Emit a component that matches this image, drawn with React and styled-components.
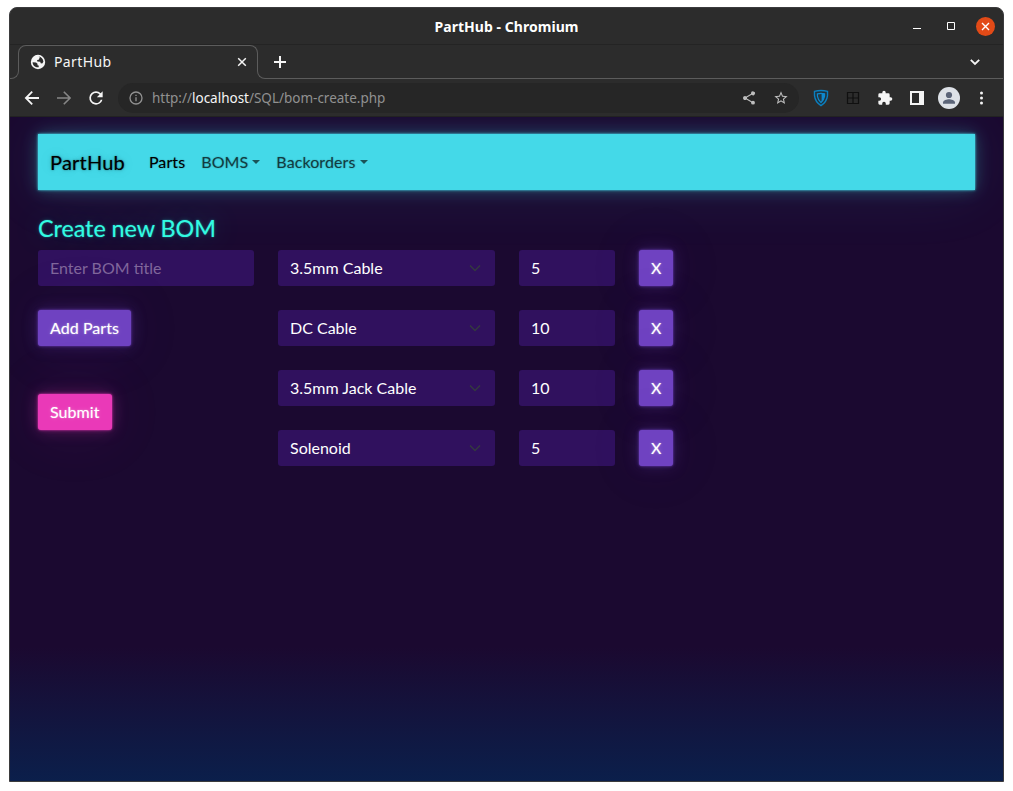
import React from "react";
import styled, { createGlobalStyle, css } from "styled-components";

const GlobalStyle = createGlobalStyle`
  *, *::before, *::after { box-sizing: border-box; }
  body { margin: 0; background: #fff; }
  button, input { font: inherit; margin: 0; }
`;

const glow = (rgb) => css`
  box-shadow: 0 0 2px rgba(${rgb}, 0.9), 0 0 4px rgba(${rgb}, 0.4),
    0 0 1rem rgba(${rgb}, 0.3), 0 0 4rem rgba(${rgb}, 0.1);
`;

const Desktop = styled.div`
  width: 1013px;
  height: 791px;
  padding: 7px 9px 9px;
  overflow: hidden;
`;

const Window = styled.div`
  width: 995px;
  height: 775px;
  display: flex;
  flex-direction: column;
  overflow: hidden;
  border: 1px solid #3b3b3d;
  border-radius: 8px 8px 0 0;
  background: #2c2c2c;
  font-family: "Noto Sans", "Open Sans", sans-serif;
`;

const TitleBar = styled.header`
  flex: none;
  height: 37px;
  display: grid;
  grid-template-columns: 1fr auto 1fr;
  align-items: center;
  border-bottom: 1px solid #242424;
  color: #fff;
`;

const WindowTitle = styled.div`
  grid-column: 2;
  font-size: 14px;
  font-weight: 700;
  line-height: 18px;
  padding-top: 2px;
  white-space: nowrap;
  letter-spacing: 0.04px;
`;

const WindowControls = styled.div`
  justify-self: end;
  display: flex;
  align-items: center;
  padding-right: 8px;
  gap: 24px;
`;

const CloseCircle = styled.span`
  display: flex;
  align-items: center;
  justify-content: center;
  width: 19px;
  height: 19px;
  margin-left: -4px;
  border-radius: 50%;
  background: #e24a17;
`;

const Icon = styled.svg`
  display: block;
  flex: none;
`;

const TabStrip = styled.div`
  flex: none;
  height: 34px;
  display: flex;
  color: #f5f5f5;
`;

const TabEdge = styled.div`
  width: ${(p) => (p.$left ? "9px" : "8px")};
  border: solid #5c5c5c;
  border-width: 0 ${(p) => (p.$left ? "1px" : "0")} 1px ${(p) => (p.$left ? "0" : "1px")};
  border-radius: ${(p) => (p.$left ? "0 0 8px 0" : "0 0 0 8px")};
  margin-top: 9px;
`;

const Tab = styled.div`
  width: 240px;
  margin: 0 -1px;
  display: flex;
  align-items: center;
  padding: 0 10px 0 12px;
  position: relative;
`;

const TabOutline = styled.span`
  position: absolute;
  inset: 0 0 auto 0;
  height: 12px;
  border: 1px solid #5c5c5c;
  border-bottom: 0;
  border-radius: 8px 8px 0 0;
`;

const TabTitle = styled.span`
  margin-left: 8px;
  flex: 1;
  padding-bottom: 1px;
  font-size: 14px;
  line-height: 18px;
  letter-spacing: 0.4px;
`;

const StripRest = styled.div`
  flex: 1;
  display: flex;
  align-items: center;
  justify-content: space-between;
  padding: 0 22px 0 8px;
  border-bottom: 1px solid #5c5c5c;
`;

const Toolbar = styled.div`
  flex: none;
  height: 38px;
  display: flex;
  align-items: center;
  padding: 0 6px 0 14px;
  border-bottom: 1px solid #222;
  color: #f5f5f5;
`;

const NavIcons = styled.div`
  flex: none;
  display: flex;
  align-items: center;
  gap: 16px;
  width: 94px;
`;

const ReloadSlot = styled.span`
  margin-left: -2px;
`;

const AddressBar = styled.div`
  flex: none;
  width: 681px;
  height: 30px;
  display: flex;
  align-items: center;
  padding: 0 10px;
  border-radius: 15px;
  background: #262626;
  color: #919191;
`;

const Url = styled.span`
  flex: 1;
  margin-left: 8px;
  font-size: 13.5px;
  white-space: nowrap;
  letter-spacing: -0.01px;
  b { color: #f5f5f5; font-weight: 400; }
`;

const AddressActions = styled.div`
  display: flex;
  gap: 16px;
  color: #bdbdbd;
`;

const Extensions = styled.div`
  flex: none;
  display: grid;
  grid-template-columns: repeat(6, 32px);
  align-items: center;
  justify-items: center;
  padding-left: 6px;
`;

const Page = styled.main`
  flex: 1;
  min-height: 0;
  overflow: hidden;
  padding: 17px 28px 0;
  font-family: Lato, sans-serif;
  font-size: 16px;
  line-height: 24px;
  color: #fff;
  background: linear-gradient(180deg, #1b0930 0, #1b0930 530px, #0b1f4b 100%);
`;

const Navbar = styled.nav`
  height: 56px;
  display: flex;
  align-items: center;
  padding: 0 12px;
  background: #44d9e8;
  ${glow("68, 217, 232")}
`;

const Brand = styled.a`
  margin-right: 16px;
  padding-bottom: 1px;
  font-size: 20px;
  line-height: 30px;
  letter-spacing: 0.2px;
  color: #000;
  text-shadow: 0 0 1px rgba(0, 0, 0, 0.3), 0 0 2px rgba(0, 0, 0, 0.3),
    0 0 5px rgba(0, 0, 0, 0.2), 0 0 20px rgba(0, 0, 0, 0.1);
`;

const NavLink = styled.a`
  display: flex;
  align-items: center;
  padding: 0 8px;
  letter-spacing: 0.1px;
  color: ${(p) => (p.$active ? "#000" : "rgba(0, 0, 0, 0.62)")};
  text-shadow: 0 0 1px rgba(0, 0, 0, 0.3), 0 0 2px rgba(0, 0, 0, 0.15);
`;

const Caret = styled.span`
  margin-left: 4px;
  border: solid transparent;
  border-top-color: currentColor;
  border-width: 4.5px 4.5px 0;
  margin-bottom: 1px;
`;

const Heading = styled.h1`
  margin: 24px 0 8px;
  font-size: 23.35px;
  font-weight: 400;
  line-height: 28px;
  letter-spacing: -0.05px;
  color: #32fbe2;
  text-shadow: 0 0 1px rgba(50, 251, 226, 0.3), 0 0 2px rgba(50, 251, 226, 0.3),
    0 0 5px rgba(50, 251, 226, 0.2), 0 0 30px rgba(50, 251, 226, 0.3);
`;

const Form = styled.form`
  display: flex;
  align-items: flex-start;
  gap: 24px;
`;

const SideColumn = styled.div`
  width: 216px;
  display: flex;
  flex-direction: column;
  align-items: flex-start;
`;

const fieldStyle = css`
  height: 36px;
  padding: 0 12px;
  border: 0;
  border-radius: 3px;
  background: #30115e;
  color: #fff;
`;

const Field = styled.input`
  ${fieldStyle}
  width: ${(p) => p.$width};
  padding-bottom: 2px;
  outline: 0;
  &::placeholder { color: #80679b; opacity: 1; }
`;

const Select = styled.div`
  ${fieldStyle}
  display: flex;
  align-items: center;
  justify-content: space-between;
  width: 217px;
`;

const Button = styled.button`
  height: 36px;
  padding: 0 12px;
  border: 0;
  border-radius: 3px;
  letter-spacing: 0.06px;
  margin-top: ${(p) => p.$top || "0"};
  background: ${(p) => (p.$pink ? "#ea39b8" : "#6f42c1")};
  color: #fff;
  text-shadow: 0 0 1px rgba(255, 255, 255, 0.3), 0 0 2px rgba(255, 255, 255, 0.3),
    0 0 5px rgba(255, 255, 255, 0.2);
  ${(p) => glow(p.$pink ? "234, 57, 184" : "111, 66, 193")}
`;

const PartRows = styled.div`
  display: grid;
  gap: 24px;
`;

const PartRow = styled.div`
  display: flex;
  gap: 24px;
`;

const parts = [
  ["3.5mm Cable", 5],
  ["DC Cable", 10],
  ["3.5mm Jack Cable", 10],
  ["Solenoid", 5],
];

const Glyph = ({ d, size = 16, box = 24 }) => (
  <Icon width={size} height={size} viewBox={`0 0 ${box} ${box}`} fill="currentColor">
    <path d={d} />
  </Icon>
);

const Line = ({ d, w = 12, h = 12, stroke = 1.5, color = "currentColor" }) => (
  <Icon width={w} height={h} viewBox={`0 0 ${w} ${h}`} fill="none" stroke={color} strokeWidth={stroke}>
    <path d={d} />
  </Icon>
);

function Chrome() {
  return (
    <>
      <TitleBar>
        <WindowTitle>PartHub - Chromium</WindowTitle>
        <WindowControls>
          <Line w={10} h={10} stroke={1} d="M1 7.5h8" />
          <Line w={10} h={10} stroke={1} d="M1.5 1.5h7v7h-7z" />
          <CloseCircle><Line w={9} h={9} stroke={1.4} color="#fff" d="M1 1l7 7M8 1l-7 7" /></CloseCircle>
        </WindowControls>
      </TitleBar>
      <TabStrip>
        <TabEdge $left />
        <Tab>
          <TabOutline />
          <Icon width="16" height="16" viewBox="0 0 16 16">
            <circle cx="8" cy="8" r="7.2" fill="#f5f5f5" />
            <path d="M2.6 8.2L6 8.4l1.5 1.3v1.5l1.2.3v1.8C5.3 13.6 2.6 11.3 2.6 8.2z" fill="#2c2c2c" />
            <path d="M8.6 2.6c2.6.3 4.7 2.6 4.8 5.2l-1.2 1.6-1.5-.1-.5-1.5-2.9-.2-.2-1.6 1.7-.3.2-1.3 1.1-.4z" fill="#2c2c2c" />
          </Icon>
          <TabTitle>PartHub</TabTitle>
          <Line d="M2.2 2.2l7.6 7.6M9.8 2.2l-7.6 7.6" />
        </Tab>
        <TabEdge />
        <StripRest>
          <Line w={14} h={14} stroke={2} d="M7 1v12M1 7h12" />
          <Line w={12} h={12} stroke={1.8} d="M1.8 3.8L6 8l4.2-4.2" />
        </StripRest>
      </TabStrip>
      <Toolbar>
        <NavIcons>
          <Line w={16} h={16} stroke={1.8} d="M15 8H2M8.2 1.7L1.9 8l6.3 6.3" />
          <Line w={16} h={16} stroke={1.6} color="#868686" d="M1 8h13M7.8 1.7L14.1 8l-6.3 6.3" />
          <ReloadSlot>
            <Glyph size={20} d="M17.65 6.35A7.958 7.958 0 0 0 12 4a8 8 0 1 0 7.73 10h-2.08A5.99 5.99 0 0 1 12 18a6 6 0 1 1 0-12c1.66 0 3.14.69 4.22 1.78L13 11h7V4z" />
          </ReloadSlot>
        </NavIcons>
        <AddressBar>
          <Glyph d="M11 7h2v2h-2zm0 4h2v6h-2zm1-9a10 10 0 1 0 0 20 10 10 0 0 0 0-20zm0 18a8 8 0 1 1 0-16 8 8 0 0 1 0 16z" />
          <Url>http://<b>localhost</b>/SQL/bom-create.php</Url>
          <AddressActions>
            <Glyph d="M18 16.08c-.76 0-1.44.3-1.96.77L8.91 12.7a3.3 3.3 0 0 0 0-1.39l7.05-4.11A2.99 2.99 0 1 0 15 5c0 .24.04.47.09.7L8.04 9.81a3 3 0 1 0 0 4.38l7.12 4.16c-.05.21-.08.43-.08.65A2.92 2.92 0 1 0 18 16.08z" />
            <Glyph d="M22 9.24l-7.19-.62L12 2 9.19 8.63 2 9.24l5.46 4.73L5.82 21 12 17.27 18.18 21l-1.63-7.03zM12 15.4l-3.76 2.27 1-4.28-3.32-2.88 4.38-.38L12 6.1l1.71 4.04 4.38.38-3.32 2.88 1 4.28z" />
          </AddressActions>
        </AddressBar>
        <Extensions>
          <Icon width="16" height="18" viewBox="0 0 16 18">
            <path d="M1.5 2.4Q8 .6 14.5 2.4v4.2Q13.8 13 8 16.6 2.2 13 1.5 6.6z" fill="#20303a" stroke="#0a7fbf" strokeWidth="1.4" />
            <path d="M4.4 4.8Q8 3.8 11.6 4.8v2.3Q11 11 8 13.6 5 11 4.4 7.1z" fill="#213844" stroke="#0f88cc" strokeWidth="1.2" />
            <path d="M8.6 4.2v9Q11 11 11.6 7.1V4.8z" fill="#0f88cc" />
          </Icon>
          <Line w={14} h={14} stroke={1.2} color="#101010" d="M1.5 1.5h11v11h-11zM7 1.5v11M1.5 7h11" />
          <Glyph size={16} d="M20.5 11H19V7a2 2 0 0 0-2-2h-4V3.5a2.5 2.5 0 0 0-5 0V5H4a2 2 0 0 0-2 2v3.8h1.5a2.7 2.7 0 0 1 0 5.4H2V20a2 2 0 0 0 2 2h3.8v-1.5a2.7 2.7 0 0 1 5.4 0V22H17a2 2 0 0 0 2-2v-4h1.5a2.5 2.5 0 0 0 0-5z" />
          <Icon width="14" height="14" viewBox="0 0 14 14"><path d="M0 0h14v14H0zM2 2v10h7V2z" fill="#f5f5f5" fillRule="evenodd" /></Icon>
          <Icon width="22" height="22" viewBox="0 0 22 22">
            <circle cx="11" cy="11" r="11" fill="#dde1e7" />
            <circle cx="11" cy="8" r="3.1" fill="#5b6478" />
            <path d="M5 16.8v-1.4C5 13.2 9 12.2 11 12.2s6 1 6 3.2v1.4z" fill="#5b6478" />
          </Icon>
          <Icon width="14" height="14" viewBox="0 0 14 14" fill="#f5f5f5">
            <circle cx="7.5" cy="2" r="1.5" /><circle cx="7.5" cy="7" r="1.5" /><circle cx="7.5" cy="12" r="1.5" />
          </Icon>
        </Extensions>
      </Toolbar>
    </>
  );
}

export default function App() {
  return (
    <Desktop>
      <GlobalStyle />
      <Window>
        <Chrome />
        <Page>
          <Navbar>
            <Brand>PartHub</Brand>
            <NavLink $active>Parts</NavLink>
            <NavLink>BOMS<Caret /></NavLink>
            <NavLink>Backorders<Caret /></NavLink>
          </Navbar>
          <Heading>Create new BOM</Heading>
          <Form>
            <SideColumn>
              <Field $width="216px" placeholder="Enter BOM title" />
              <Button type="button" $top="24px">Add Parts</Button>
              <Button type="button" $pink $top="48px">Submit</Button>
            </SideColumn>
            <PartRows>
              {parts.map(([name, quantity]) => (
                <PartRow key={name}>
                  <Select>
                    {name}
                    <Line w={16} h={12} stroke={1.5} color="#343a40" d="M3 3.5l5 5 5-5" />
                  </Select>
                  <Field $width="96px" defaultValue={quantity} />
                  <Button type="button">X</Button>
                </PartRow>
              ))}
            </PartRows>
          </Form>
        </Page>
      </Window>
    </Desktop>
  );
}
